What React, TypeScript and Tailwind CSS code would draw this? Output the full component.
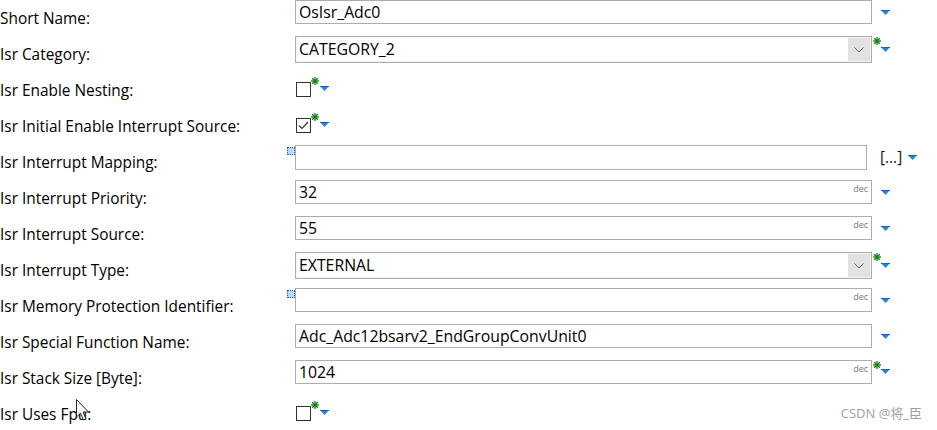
import React from 'react';

type Row =
  | { kind: 'text'; label: string; value: string; dec?: boolean; star?: boolean; marker?: boolean }
  | { kind: 'combo'; label: string; value: string }
  | { kind: 'check'; label: string; checked: boolean }
  | { kind: 'ref'; label: string };

const rows: Row[] = [
  { kind: 'text', label: 'Short Name:', value: 'OsIsr_Adc0' },
  { kind: 'combo', label: 'Isr Category:', value: 'CATEGORY_2' },
  { kind: 'check', label: 'Isr Enable Nesting:', checked: false },
  { kind: 'check', label: 'Isr Initial Enable Interrupt Source:', checked: true },
  { kind: 'ref', label: 'Isr Interrupt Mapping:' },
  { kind: 'text', label: 'Isr Interrupt Priority:', value: '32', dec: true },
  { kind: 'text', label: 'Isr Interrupt Source:', value: '55', dec: true },
  { kind: 'combo', label: 'Isr Interrupt Type:', value: 'EXTERNAL' },
  { kind: 'text', label: 'Isr Memory Protection Identifier:', value: '', dec: true, marker: true },
  { kind: 'text', label: 'Isr Special Function Name:', value: 'Adc_Adc12bsarv2_EndGroupConvUnit0' },
  { kind: 'text', label: 'Isr Stack Size [Byte]:', value: '1024', dec: true, star: true },
  { kind: 'check', label: 'Isr Uses Fpu:', checked: false },
];

const Star = () => (
  <svg width="8" height="8" viewBox="0 0 8 8" className="block">
    <g stroke="#0b7d0b" strokeWidth="1.3">
      <line x1="4" y1="0" x2="4" y2="8" />
      <line x1="0" y1="4" x2="8" y2="4" />
      <line x1="1.2" y1="1.2" x2="6.8" y2="6.8" />
      <line x1="6.8" y1="1.2" x2="1.2" y2="6.8" />
    </g>
  </svg>
);

const Tri = () => (
  <svg width="9" height="5" viewBox="0 0 9 5" className="block">
    <polygon points="0,0 9,0 4.5,5" fill="#1d84e0" />
    <rect x="0" y="0" width="9" height="1" fill="#0f63b8" />
  </svg>
);

const Marker = () => (
  <div className="absolute left-[-9px] top-[1px] w-[8px] h-[8px] border border-dotted border-[#1f5fbf] bg-[#bcd8f5]" />
);

const Label = ({ text }: { text: string }) => (
  <div className="w-[295px] shrink-0 pt-[9px] text-[15.4px] leading-[20px] text-black whitespace-nowrap">
    {text}
  </div>
);

const App: React.FC = () => {
  return (
    <div
      className="relative w-[937px] h-[430px] overflow-hidden bg-white"
      style={{ fontFamily: '"Open Sans", "Noto Sans", sans-serif' }}
    >
      {rows.map((row, i) => (
        <div key={i} className="flex items-start h-[36px]">
          <Label text={row.label} />

          {row.kind === 'text' && (
            <>
              <div className="relative w-[577px] h-[24px] border border-[#adadad] bg-white px-[3px] text-[15.8px] leading-[22px] text-black">
                {row.marker && <Marker />}
                {row.value}
                {row.dec && (
                  <span className="absolute right-[3px] top-[3px] text-[9px] leading-[10px] text-[#7c7c7c]">dec</span>
                )}
              </div>
              <div className="w-[8px] mt-[1px] ml-[1px]">{row.star && <Star />}</div>
              <div className={row.star ? 'mt-[9px]' : 'mt-[10px]'}>
                <Tri />
              </div>
            </>
          )}

          {row.kind === 'combo' && (
            <>
              <div className="flex w-[577px] h-[27px] border border-[#adadad] bg-[#f4f4f4] p-[1px]">
                <div className="flex-1 bg-white pl-[2px] text-[15.8px] leading-[23px] text-black">{row.value}</div>
                <div className="w-[22px] flex items-center justify-center bg-[#e1e1e1]">
                  <svg width="10" height="6" viewBox="0 0 10 6">
                    <polyline points="0.5,0.5 5,5 9.5,0.5" fill="none" stroke="#606060" strokeWidth="1" />
                  </svg>
                </div>
              </div>
              <div className="w-[8px] mt-[1px] ml-[1px]">
                <Star />
              </div>
              <div className="mt-[11px]">
                <Tri />
              </div>
            </>
          )}

          {row.kind === 'check' && (
            <>
              <div className="ml-[1px] mt-[10px] w-[15px] h-[15px] border border-[#333] bg-white flex items-center justify-center">
                {row.checked && (
                  <svg width="11" height="9" viewBox="0 0 11 9">
                    <polyline points="1,4.5 4,7.5 10,1" fill="none" stroke="#333" strokeWidth="1.2" />
                  </svg>
                )}
              </div>
              <div className="mt-[5px]">
                <Star />
              </div>
              <div className="ml-[1px] mt-[14px]">
                <Tri />
              </div>
            </>
          )}

          {row.kind === 'ref' && (
            <>
              <div className="relative w-[572px] h-[25px] mt-[1px] border border-[#adadad] bg-white">
                <Marker />
              </div>
              <div className="ml-[13px] mt-[4px] text-[15.4px] leading-[20px] text-[#111]">[...]</div>
              <div className="ml-[6px] mt-[11px]">
                <Tri />
              </div>
            </>
          )}
        </div>
      ))}

      {/* mouse pointer */}
      <svg className="absolute left-[76px] top-[399px]" width="16" height="25" viewBox="0 0 16 25">
        <path
          d="M0.5 0.5 L0.5 18 L4.5 14 L7.5 21 L10 20 L7 13 L12.5 13 Z"
          fill="#fff"
          stroke="#222"
          strokeWidth="1"
        />
      </svg>

      <div
        className="absolute right-[15px] bottom-[9px] text-[13px] leading-[16px] text-[#a0a0a0]"
        style={{ fontFamily: '"Open Sans", "Noto Sans CJK SC", sans-serif' }}
      >
        CSDN @将_臣
      </div>
    </div>
  );
};

export default App;
